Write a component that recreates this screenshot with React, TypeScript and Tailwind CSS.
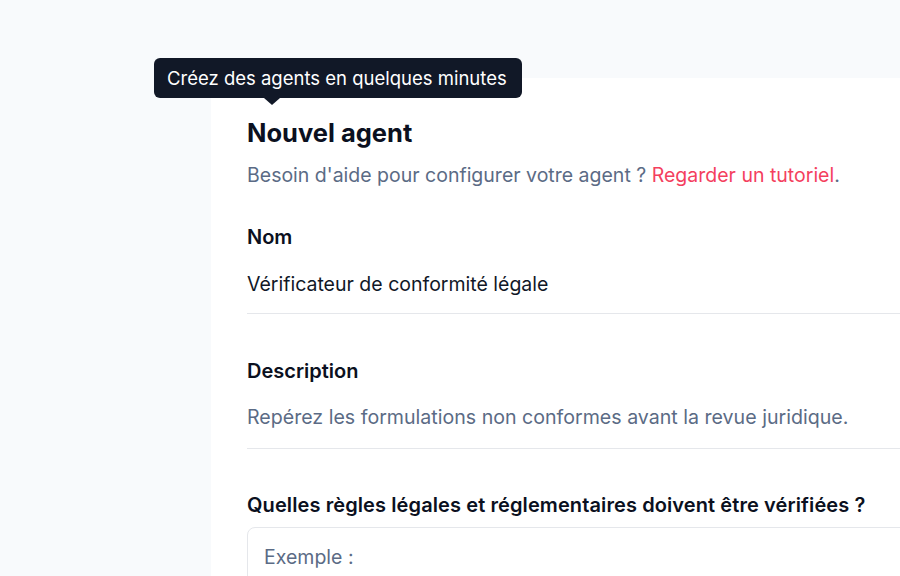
import React from "react";

const App: React.FC = () => {
  return (
    <div
      className="relative h-[576px] w-[900px] overflow-hidden bg-[#f8fafc] pl-[211px] pt-[78px]"
      style={{ fontFamily: "Inter, 'Noto Sans', sans-serif" }}
    >
      <div className="h-full w-[760px] bg-white pl-9 pt-[39px]">
        <h1 className="text-[25.5px] leading-8 font-bold text-[#0b1020]">Nouvel agent</h1>
        <p className="mt-[10px] whitespace-nowrap text-[19.5px] leading-8 text-[#5b6b85]">
          Besoin d'aide pour configurer votre agent ?{" "}
          <a className="text-[#f43f5e]">Regarder un tutoriel</a>.
        </p>

        <div className="mt-[30px]">
          <label className="block text-[20px] leading-8 font-semibold text-[#0b1020]">Nom</label>
          <div className="border-b border-[#e5e7eb] pt-[15px] pb-[13px] text-[19.5px] leading-8 text-[#111827]">
            Vérificateur de conformité légale
          </div>
        </div>

        <div className="mt-[41px]">
          <label className="block text-[20px] leading-8 font-semibold text-[#0b1020]">Description</label>
          <div className="whitespace-nowrap border-b border-[#e5e7eb] pt-[14px] pb-[15px] text-[19.6px] leading-8 text-[#5b6b85]">
            Repérez les formulations non conformes avant la revue juridique.
          </div>
        </div>

        <div className="mt-[40px]">
          <label className="block whitespace-nowrap text-[20px] leading-8 font-semibold tracking-[0.1px] text-[#0b1020]">
            Quelles règles légales et réglementaires doivent être vérifiées ?
          </label>
          <div className="mt-[6px] h-[80px] rounded-lg border border-[#e5e7eb] px-4 pt-[13px] text-[19.5px] leading-8 text-[#5b6b85]">
            Exemple :
          </div>
        </div>
      </div>

      <div className="absolute left-[154px] top-[58px]">
        <div className="w-[368px] rounded-md bg-[#111827] px-[13px] py-[4px] text-[18.5px] leading-8 text-white">
          Créez des agents en quelques minutes
        </div>
        <div className="ml-[110px] h-0 w-0 border-x-[8px] border-t-[7px] border-x-transparent border-t-[#111827]" />
      </div>
    </div>
  );
};

export default App;
